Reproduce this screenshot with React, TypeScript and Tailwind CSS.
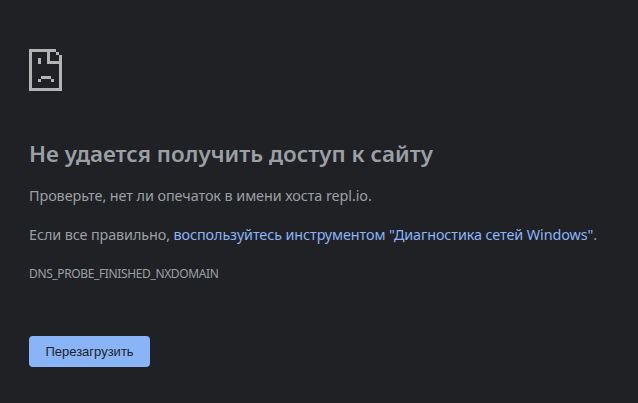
function SadPage() {
  return (
    <svg
      className="block h-[42px] w-[33px] fill-[#b4b4b4]"
      viewBox="0 0 33 42"
      shapeRendering="crispEdges"
      aria-hidden="true"
    >
      <path d="M0 0h27v3H0zM0 3h3v36H0zM0 39h33v3H0zM30 6h3v33h-3zM27 3h3v3h-3zM18 3h3v12h-3zM21 12h9v3h-9z" />
      <path d="M9 9h3v6H9zM12 27h10v3H12zM9 30h3v3H9zM22 30h3v3h-3z" />
    </svg>
  );
}

export default function App() {
  return (
    <main className="h-[403px] w-full overflow-hidden whitespace-nowrap bg-[#202124] pl-[29px] pt-[49px] font-['Noto_Sans',sans-serif] text-[#9aa0a6]">
      <SadPage />
      <h1 className="mt-[47px] text-[22.4px] font-semibold leading-[32px] tracking-[0.03px]">
        <span className="inline-block">Не удается получить доступ к сайту</span>
      </h1>
      <p className="mt-[14px] text-[14.4px] leading-[24px] tracking-[-0.08px]">
        <span className="inline-block">Проверьте, нет ли опечаток в имени хоста repl.io.</span>
      </p>
      <p className="mt-[15px] text-[14.4px] leading-[24px] tracking-[-0.11px]">
        <span className="inline-block">Если все правильно,&nbsp;</span>
        <a className="inline-block text-[#8ab4f8]">воспользуйтесь инструментом "Диагностика сетей Windows"</a>.
      </p>
      <p className="mt-[17px] text-[12px] leading-[20px] tracking-[-0.37px]">
        <span className="inline-block">DNS_PROBE_FINISHED_NXDOMAIN</span>
      </p>
      <button className="mt-[52px] block h-[31px] w-[121px] rounded-[4px] bg-[#8ab4f8] font-['Liberation_Sans',sans-serif] text-[13px] leading-[31px] text-[#202124]">
        Перезагрузить
      </button>
    </main>
  );
}
